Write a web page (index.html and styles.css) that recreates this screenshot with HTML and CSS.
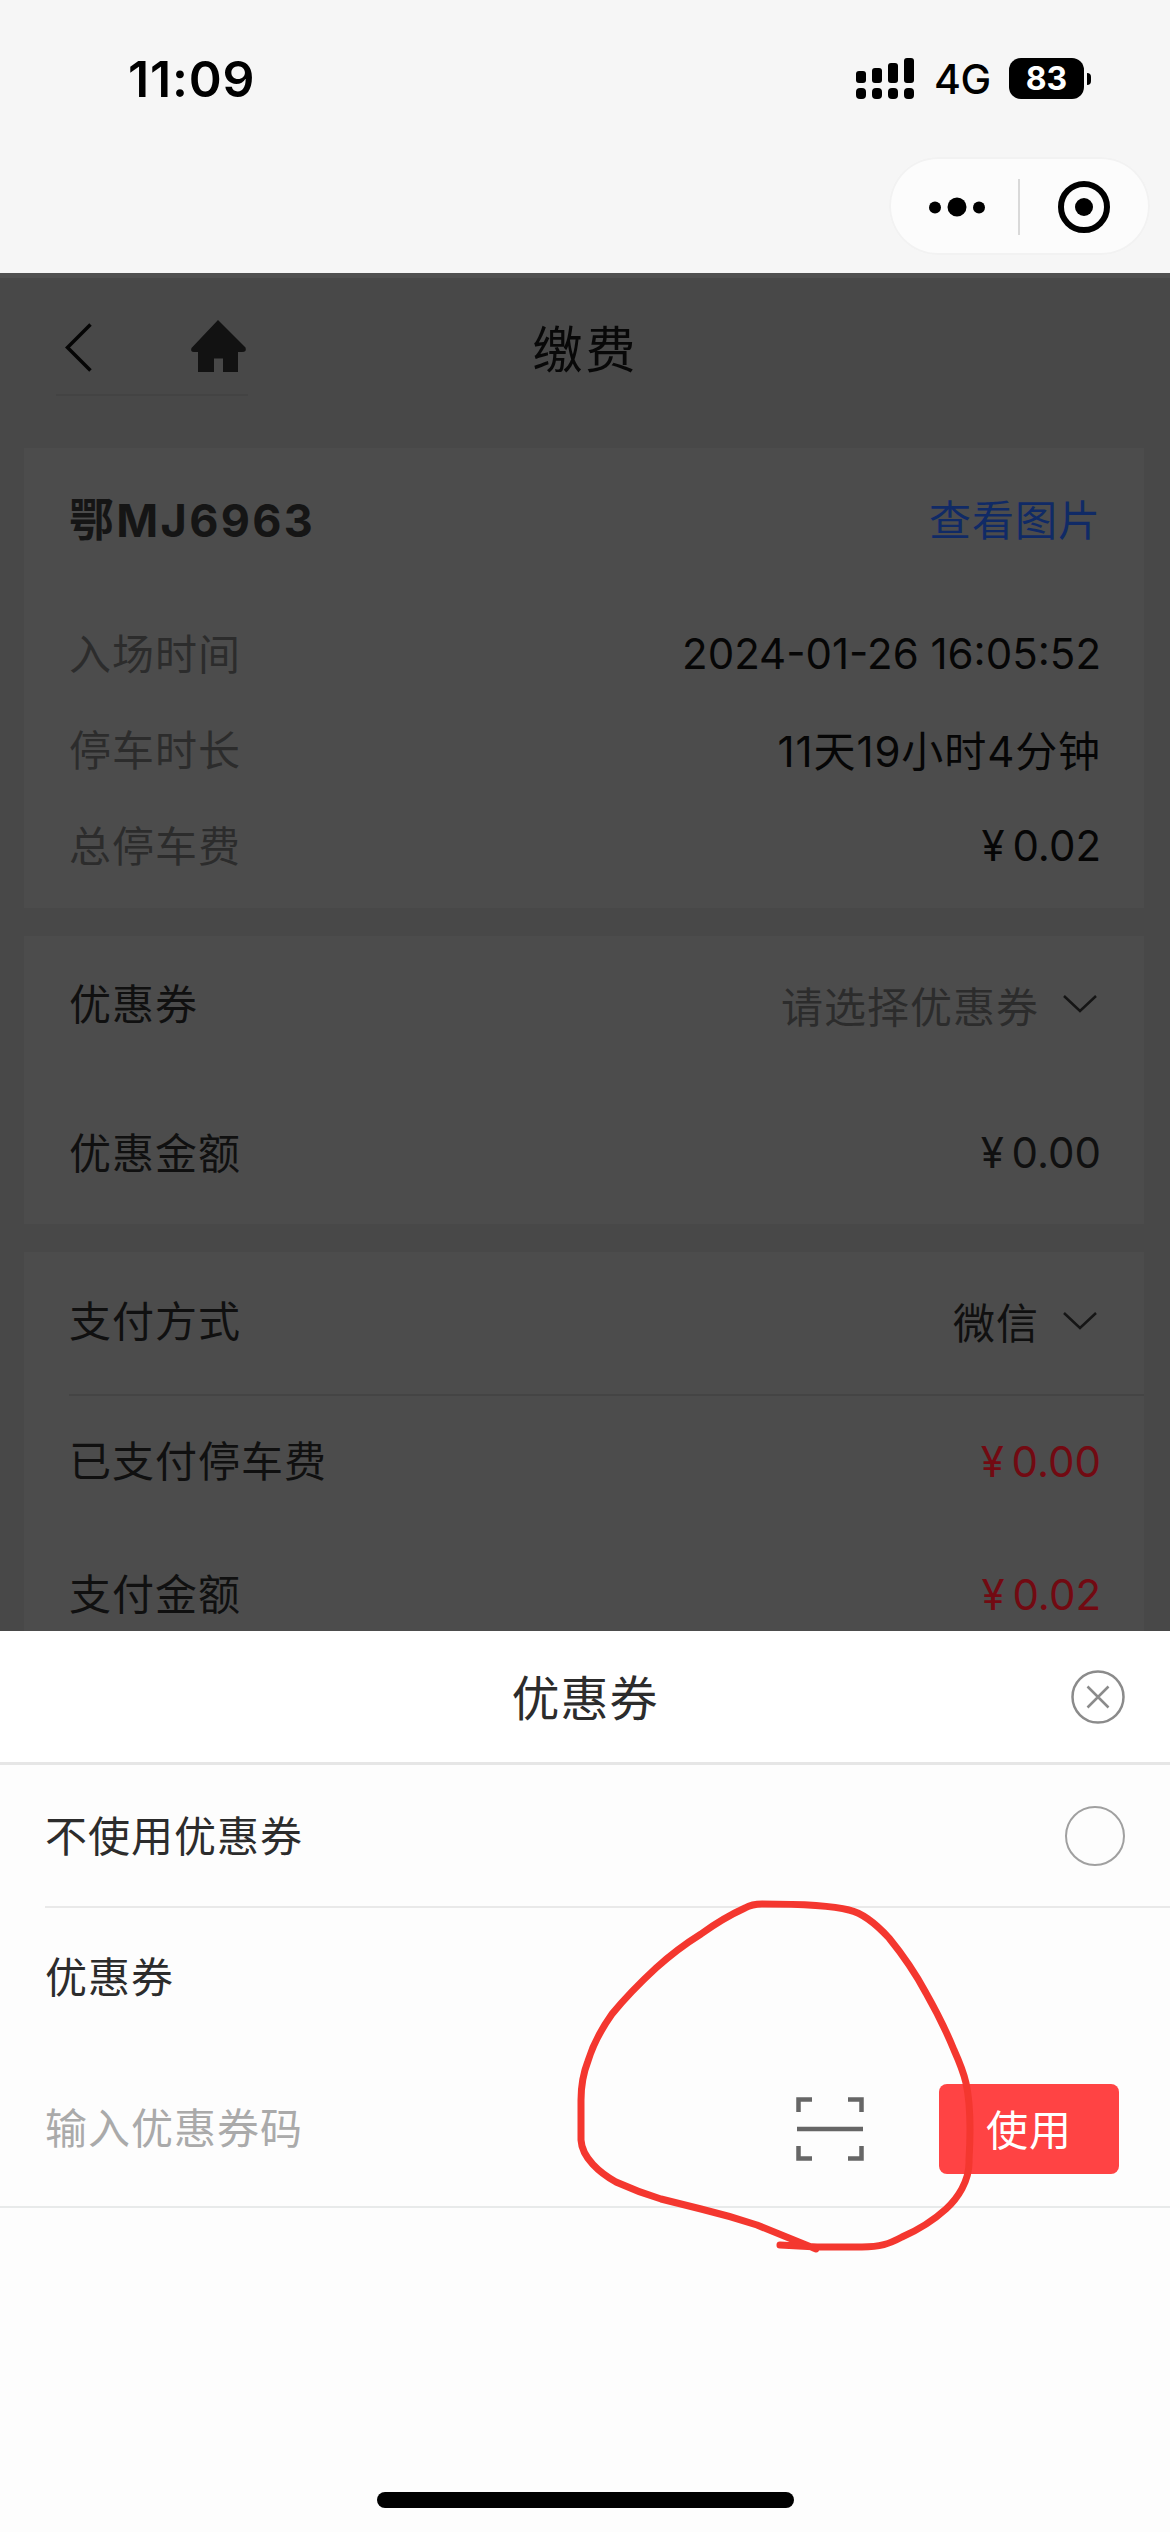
FILE: index.html
```html
<!DOCTYPE html>
<html lang="zh-CN">
<head>
<meta charset="utf-8">
<title>缴费</title>
<link rel="stylesheet" href="styles.css">
</head>
<body>
<div class="screen">
  <header class="top">
    <div class="status">
      <span class="time">11:09</span>
      <div class="status-icons">
        <svg class="signal" width="58" height="42" viewBox="0 0 58 42">
          <rect x="0" y="13" width="10" height="12" rx="3"/><rect x="16" y="10" width="10" height="15" rx="3"/><rect x="32" y="5" width="10" height="20" rx="3"/><rect x="48" y="0" width="10" height="25" rx="3"/>
          <rect x="0" y="30" width="10" height="11" rx="4"/><rect x="16" y="30" width="10" height="11" rx="4"/><rect x="32" y="30" width="10" height="11" rx="4"/><rect x="48" y="30" width="10" height="11" rx="4"/>
        </svg>
        <span class="network">4G</span>
        <div class="battery"><span class="battery-body">83</span><span class="battery-nub"></span></div>
      </div>
    </div>
    <div class="capsule">
      <svg width="261" height="98" viewBox="0 0 261 98">
        <circle cx="46" cy="50.5" r="6"/><circle cx="68" cy="50" r="9.5"/><circle cx="90" cy="50.5" r="6"/>
        <path d="M130 22V78" stroke="#d9d9d9" stroke-width="2"/>
        <circle cx="195" cy="50" r="23" fill="none" stroke="#000" stroke-width="6"/><circle cx="195" cy="50" r="9"/>
      </svg>
    </div>
  </header>

  <main class="page">
    <nav class="nav">
      <div class="nav-pill">
        <svg width="192" height="92" viewBox="0 0 192 92">
          <path d="M34.500 21.500L11.500 44.500L34.500 67.500" fill="none" stroke="#050505" stroke-width="3.500"/>
          <path d="M162 17L189.500 44.500Q191 49 186 49H182V69H167V55.500H158V69H142V49H138Q134 49 135.500 45Z" fill="#121212"/>
        </svg>
      </div>
      <h1 class="nav-title">缴费</h1>
    </nav>
    <section class="card card-info">
      <div class="row row-plate"><strong class="plate">鄂MJ6963</strong><a class="link">查看图片</a></div>
      <div class="row row-detail"><span class="label muted">入场时间</span><span class="value">2024-01-26 16:05:52</span></div>
      <div class="row row-detail"><span class="label muted">停车时长</span><span class="value duration">11天19小时4分钟</span></div>
      <div class="row row-detail"><span class="label muted">总停车费</span><span class="value money">¥ 0.02</span></div>
    </section>
    <section class="card card-coupon">
      <div class="row row-coupon"><span class="label">优惠券</span><span class="select"><span class="muted">请选择优惠券</span><svg class="chevron" width="34" height="20" viewBox="0 0 34 20"><path d="M1 2L17 17L33 2"/></svg></span></div>
      <div class="row row-discount"><span class="label">优惠金额</span><span class="money">¥ 0.00</span></div>
    </section>
    <section class="card card-pay">
      <div class="row row-method"><span class="label">支付方式</span><span class="select"><span>微信</span><svg class="chevron" width="34" height="20" viewBox="0 0 34 20"><path d="M1 2L17 17L33 2"/></svg></span></div>
      <div class="row row-paid"><span class="label">已支付停车费</span><span class="money due">¥ 0.00</span></div>
      <div class="row row-total"><span class="label">支付金额</span><span class="money due">¥ 0.02</span></div>
    </section>
  </main>

  <section class="sheet">
    <header class="sheet-head">
      <h2 class="sheet-title">优惠券</h2>
      <svg class="close" width="54" height="54" viewBox="0 0 54 54"><circle cx="27" cy="27" r="25.500"/><path d="M16.500 16.500L37.500 37.500M37.500 16.500L16.500 37.500"/></svg>
    </header>
    <div class="option"><span class="option-label">不使用优惠券</span><span class="radio"></span></div>
    <div class="code-title">优惠券</div>
    <div class="code-row">
      <span class="placeholder">输入优惠券码</span>
      <svg class="scan" width="68" height="64" viewBox="0 0 68 64"><path d="M2.500 15V2.500H16M52 2.500H65.500V15M2.500 49V61.500H16M52 61.500H65.500V49M1 32H67"/></svg>
      <button class="use">使用</button>
    </div>
    <div class="home-bar"></div>
  </section>

  <svg class="scribble" width="410" height="360" viewBox="570 1895 410 360">
    <path d="M780 2245L817 2247H862C880 2247 889 2244 902 2237C918 2230 935 2219 946 2209C957 2199 970 2181 969 2160Q972 2110 966 2083Q963 2070 954 2050Q943 2023 926 1993Q911 1965 889 1938Q867 1914 849 1910C830 1905 800 1904 762 1904Q752 1904 745 1908Q723 1918 701 1934Q677 1949 656 1968Q630 1992 612 2014Q595 2038 588 2061Q581 2079 581 2100V2140C582 2158 600 2173 616 2182Q638 2192 661 2199L701 2209Q730 2216 757 2225L816 2249"/>
  </svg>
</div>
</body>
</html>
```

FILE: styles.css
```css
* { box-sizing: border-box; }
body { margin: 0; }
h1, h2 { margin: 0; font-weight: 400; }

.screen {
  position: relative;
  display: flex;
  flex-direction: column;
  width: 1170px;
  height: 2532px;
  overflow: hidden;
  background: #fdfdfd;
  font-family: Inter, "Noto Sans CJK SC", sans-serif;
  font-size: 42px;
  font-weight: 400;
}

/* Status bar and mini-program capsule */
.top { flex: none; height: 273px; background: #f6f6f6; color: #000; }
.status { display: flex; justify-content: space-between; height: 157px; padding: 0 79px 0 128px; align-items: center; }
.time { font-size: 50px; font-weight: 600; letter-spacing: 0.8px; }
.status-icons { display: flex; align-items: center; }
.network { width: 55px; margin: 0 20px; font-size: 41px; font-weight: 500; line-height: 42px; letter-spacing: -0.5px; white-space: nowrap; }
.battery { display: flex; align-items: center; gap: 3px; }
.battery-body { width: 75px; height: 41px; border-radius: 12px; background: #000; color: #fff; font-size: 32px; font-weight: 700; line-height: 41px; text-align: center; }
.battery-nub { width: 4px; height: 12px; border-radius: 0 5px 5px 0; background: #000; }
.capsule { width: 261px; height: 98px; margin-left: 889px; border-radius: 49px; background: #fcfcfc; box-shadow: inset 0 0 0 2px #f2f2f2; }
.capsule svg { display: block; }

/* Dimmed payment page */
.page { flex: none; height: 1358px; padding: 0 26px 0 24px; overflow: hidden; border-top: 5px solid #505050; background: #484848; color: #101010; letter-spacing: 1px; }
.nav { display: grid; grid-template-columns: 1fr auto 1fr; height: 170px; padding-top: 25px; align-items: start; }
.nav-pill { width: 192px; height: 93px; margin-left: 32px; border-bottom: 2px solid #434343; }
.nav-pill svg { display: block; }
.nav-title { height: 92px; padding-left: 3px; font-size: 50px; line-height: 95px; letter-spacing: 3px; color: #080808; }
.card { margin-bottom: 28px; padding-left: 45px; background: #4c4c4c; }
.row { display: flex; justify-content: space-between; align-items: center; padding-right: 43px; white-space: nowrap; }
.label { padding-bottom: 6px; }
.muted { color: #2c2c2c; }
.value { color: #060606; }
.card-info { height: 460px; padding-top: 24px; }
.row-plate { height: 90px; margin-bottom: 43px; }
.row-detail { height: 96px; letter-spacing: 0; }
.row-detail .label { padding-bottom: 4px; letter-spacing: 1px; }
.plate { color: #151515; font-weight: 700; font-size: 45px; letter-spacing: 2.3px; }
.link { color: #102a66; }
.duration { padding-bottom: 2px; letter-spacing: 0.9px; }
.money { letter-spacing: 0; word-spacing: -4px; }
.card-coupon { height: 288px; }
.row-coupon { height: 136px; }
.row-discount { height: 161px; }
.row-discount .label { padding-bottom: 5px; }
.select { display: flex; align-items: center; gap: 24px; }
.chevron { margin-right: 4px; fill: none; stroke: #151515; stroke-width: 2.500; }
.card-pay { height: 400px; }
.row-method { height: 144px; padding-bottom: 5px; border-bottom: 2px solid #444; }
.row-method .label { padding-bottom: 4px; }
.row-paid { height: 130px; }
.row-total { height: 137px; }
.card-pay .row { margin-right: 0; }
.due { color: #720a12; }

/* Coupon sheet */
.sheet { display: flex; flex-direction: column; flex: 1; background: #fdfdfd; color: #2c2c2c; letter-spacing: 1px; }
.sheet-head { display: grid; grid-template-columns: 54px 1fr 54px; align-items: center; height: 134px; padding: 0 45px; border-bottom: 3px solid #e6e6e6; background: #fff; }
.sheet-title { grid-column: 2; padding-bottom: 3px; font-size: 48px; text-align: center; }
.close { fill: none; stroke: #8b8b8b; stroke-width: 2.500; }
.option { display: flex; justify-content: space-between; align-items: center; height: 143px; margin-left: 45px; padding-right: 45px; border-bottom: 2px solid #e9e9e9; }
.option-label { padding-bottom: 5px; }
.radio { width: 60px; height: 60px; border: 2.500px solid #a0a0a0; border-radius: 50%; }
.code-title { height: 138px; padding-left: 45px; line-height: 139px; }
.code-row { display: flex; align-items: center; height: 162px; padding: 6px 51px 0 45px; border-bottom: 2px solid #e8eaea; }
.placeholder { flex: 1; padding-bottom: 7px; color: #aaa; }
.scan { margin-right: 75px; fill: none; stroke: #666; stroke-width: 4.500; }
.use { width: 180px; height: 90px; padding: 0 0 3px; border: 0; border-radius: 8px; background: #ff4344; color: #fff; font: inherit; letter-spacing: 1px; }
.home-bar { width: 417px; height: 16px; margin: auto auto 24px; border-radius: 8px; background: #000; }

/* Hand-drawn mark lying over the sheet */
.scribble { position: absolute; left: 570px; top: 1895px; fill: none; stroke: #f4372f; stroke-width: 7; stroke-linecap: round; stroke-linejoin: round; }
```
